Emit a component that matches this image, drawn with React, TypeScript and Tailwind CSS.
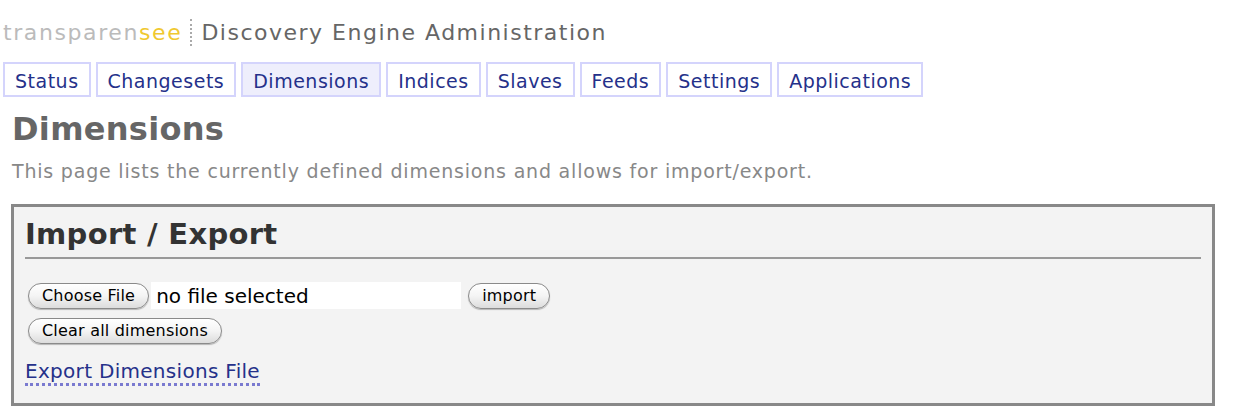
import React from "react";

const tabs = ["Status", "Changesets", "Dimensions", "Indices", "Slaves", "Feeds", "Settings", "Applications"];

function AquaButton({ children, className = "" }: { children: React.ReactNode; className?: string }) {
  return (
    <button
      className={
        "h-[26px] rounded-full border border-[#8a8a8a] bg-gradient-to-b from-[#ffffff] via-[#f4f4f4] to-[#dcdcdc] px-[13px] text-[16px] tracking-[0.2px] leading-none text-black shadow-[0_1px_1px_rgba(0,0,0,0.25)] " +
        className
      }
      style={{ fontFamily: '"DejaVu Sans", Verdana, sans-serif' }}
    >
      {children}
    </button>
  );
}

export default function App() {
  return (
    <div className="bg-white w-[1235px] h-[409px] overflow-hidden" style={{ fontFamily: '"DejaVu Sans", Verdana, sans-serif' }}>
      <div className="pl-[3px] pt-[17px] flex items-center h-[30px] box-content">
        <span className="text-[22px] tracking-[1.6px] text-[#bbbbbb]">transparen</span>
        <span className="text-[22px] tracking-[1.6px] text-[#f0c830]">see</span>
        <span className="ml-[8px] mr-[9px] h-[27px] border-l-2 border-dotted border-[#aaaaaa]"></span>
        <span className="text-[22px] tracking-[1.5px] text-[#666666]">Discovery Engine Administration</span>
      </div>
      <div className="flex gap-[5px] pl-[3px] mt-[15px]">
        {tabs.map((t) => (
          <div
            key={t}
            className={
              "h-[35px] flex items-center pt-[3px] px-[10px] border-2 border-[#d4d4fc] text-[19px] tracking-[0.5px] text-[#25318a] " +
              (t === "Dimensions" ? "bg-[#eeeefc]" : "bg-white")
            }
          >
            {t}
          </div>
        ))}
      </div>
      <h1 className="ml-[12px] mt-[12px] text-[32px] tracking-[0.3px] font-bold text-[#666666] leading-[40px]">Dimensions</h1>
      <p className="ml-[12px] mt-[10px] text-[19px] text-[#888888] tracking-[0.8px] leading-[24px]">
        This page lists the currently defined dimensions and allows for import/export.
      </p>
      <div className="ml-[11px] mt-[21px] w-[1204px] h-[202px] border-[3px] border-[#888888] bg-[#f3f3f3] px-[11px]">
        <h2 className="pt-[8px] text-[29px] tracking-[0.3px] font-bold text-[#333333] leading-[38px]">Import / Export</h2>
        <div className="mt-[4px] h-[2px] w-[1176px] bg-[#999999]"></div>
        <div className="mt-[23px] flex items-center pl-[3px]">
          <AquaButton>Choose File</AquaButton>
          <div className="ml-[2px] pl-[5px] w-[310px] h-[27px] bg-white flex items-center text-[20px] text-black">no file selected</div>
          <AquaButton className="ml-[7px]">import</AquaButton>
        </div>
        <div className="mt-[9px] pl-[3px]">
          <AquaButton>Clear all dimensions</AquaButton>
        </div>
        <a
          href="#"
          className="inline-block mt-[15px] text-[20px] tracking-[0.3px] text-[#25318a] leading-[24px] border-b-[3px] border-dotted border-[#7a7ad0]"
        >
          Export Dimensions File
        </a>
      </div>
    </div>
  );
}
